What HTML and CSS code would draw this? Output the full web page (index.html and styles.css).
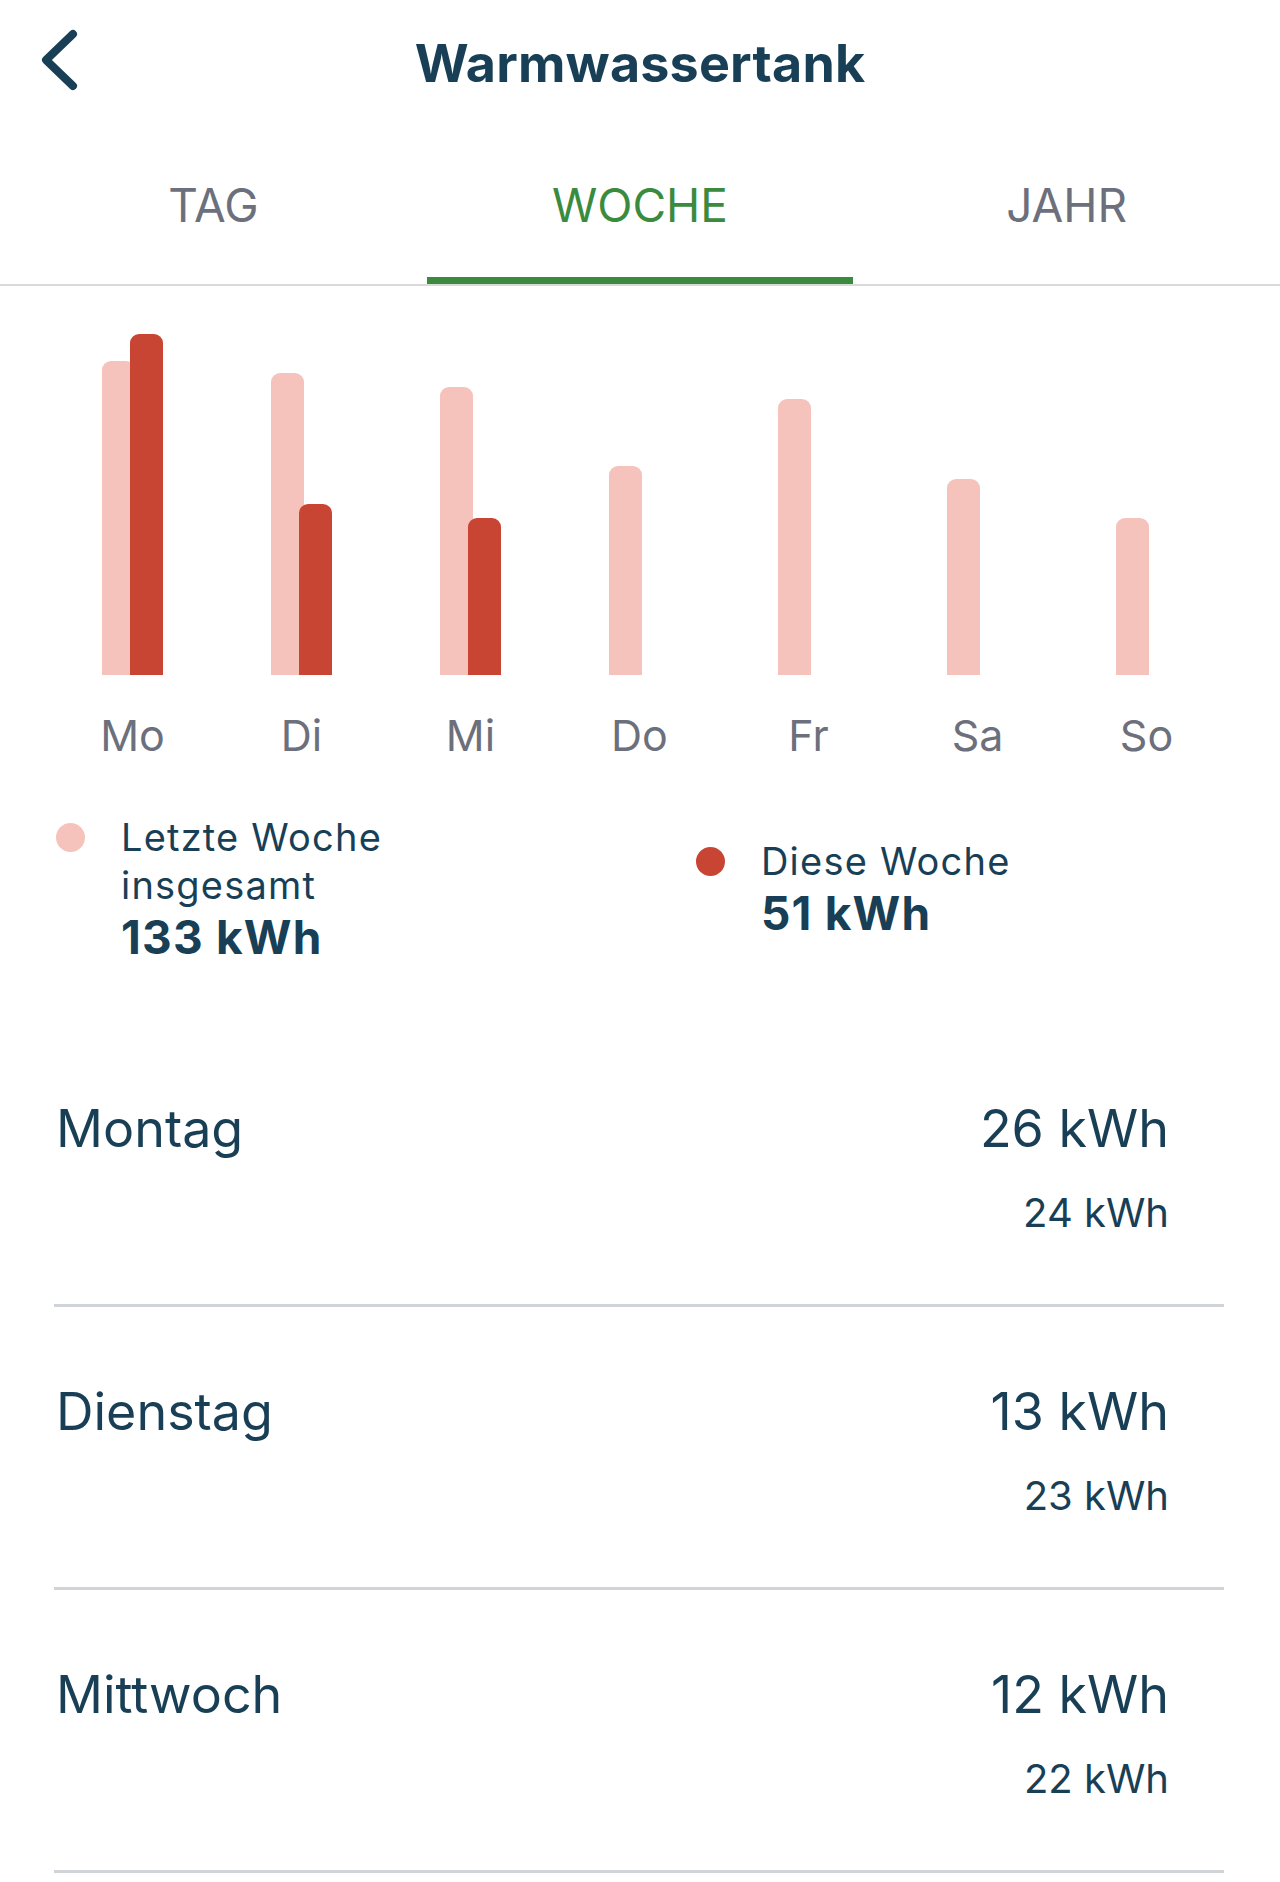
FILE: index.html
```html
<!DOCTYPE html>
<html lang="de">
<head>
    <meta charset="UTF-8">
    <meta name="viewport" content="width=device-width, initial-scale=1.0">
    <title>Warmwassertank</title>
    <link rel="stylesheet" href="styles.css">
</head>
<body>
    <header class="nav">
        <button class="back" aria-label="Zurück">
            <svg width="44" height="64" viewBox="0 0 44 64">
                <path d="M34 6 L7 32 L34 58" fill="none" stroke="#183f56" stroke-width="8" stroke-linecap="round" stroke-linejoin="round"/>
            </svg>
        </button>
        <h1 class="title">Warmwassertank</h1>
        <div></div>
    </header>

    <nav class="tabs">
        <div class="tab">TAG</div>
        <div class="tab active">WOCHE</div>
        <div class="tab">JAHR</div>
    </nav>

    <!-- bar heights: 13.1px per kWh -->
    <section class="chart">
        <div class="day">
            <div class="bars">
                <div class="bar last" style="height: 314px"></div>
                <div class="bar this" style="height: 341px"></div>
            </div>
            <div class="day-label">Mo</div>
        </div>
        <div class="day">
            <div class="bars">
                <div class="bar last" style="height: 302px"></div>
                <div class="bar this" style="height: 171px"></div>
            </div>
            <div class="day-label">Di</div>
        </div>
        <div class="day">
            <div class="bars">
                <div class="bar last" style="height: 288px"></div>
                <div class="bar this" style="height: 157px"></div>
            </div>
            <div class="day-label">Mi</div>
        </div>
        <div class="day">
            <div class="bars">
                <div class="bar last" style="height: 209px"></div>
            </div>
            <div class="day-label">Do</div>
        </div>
        <div class="day">
            <div class="bars">
                <div class="bar last" style="height: 276px"></div>
            </div>
            <div class="day-label">Fr</div>
        </div>
        <div class="day">
            <div class="bars">
                <div class="bar last" style="height: 196px"></div>
            </div>
            <div class="day-label">Sa</div>
        </div>
        <div class="day">
            <div class="bars">
                <div class="bar last" style="height: 157px"></div>
            </div>
            <div class="day-label">So</div>
        </div>
    </section>

    <section class="legend">
        <div class="legend-item">
            <span class="dot last"></span>
            <div class="legend-text">
                <div class="legend-name">Letzte Woche<br>insgesamt</div>
                <div class="legend-value">133 kWh</div>
            </div>
        </div>
        <div class="legend-item">
            <span class="dot this"></span>
            <div class="legend-text">
                <div class="legend-name">Diese Woche</div>
                <div class="legend-value">51 kWh</div>
            </div>
        </div>
    </section>

    <section class="list">
        <div class="row">
            <div class="row-day">Montag</div>
            <div class="row-values">
                <div class="row-now">26 kWh</div>
                <div class="row-before">24 kWh</div>
            </div>
        </div>
        <div class="row">
            <div class="row-day">Dienstag</div>
            <div class="row-values">
                <div class="row-now">13 kWh</div>
                <div class="row-before">23 kWh</div>
            </div>
        </div>
        <div class="row">
            <div class="row-day">Mittwoch</div>
            <div class="row-values">
                <div class="row-now">12 kWh</div>
                <div class="row-before">22 kWh</div>
            </div>
        </div>
    </section>
</body>
</html>
```

FILE: styles.css
```css
body {
    margin: 0;
    background: #fff;
    font-family: Inter, "Noto Sans", sans-serif;
    color: #183f56;
}

/* Top bar */
.nav {
    display: grid;
    grid-template-columns: 160px 1fr 160px;
    align-items: center;
    height: 110px;
    padding-top: 8px;
}

.back {
    border: none;
    background: none;
    padding: 0 0 0 39px;
    margin-top: -6px;
    display: flex;
    cursor: pointer;
}

.title {
    margin: 0;
    text-align: center;
    font-size: 52px;
    font-weight: 700;
    letter-spacing: 0.2px;
}

/* Tabs */
.tabs {
    display: grid;
    grid-template-columns: repeat(3, 1fr);
    border-bottom: 2px solid #dadada;
}

.tab {
    box-sizing: border-box;
    height: 166px;
    padding-top: 14px;
    display: flex;
    align-items: center;
    justify-content: center;
    font-size: 46px;
    color: #6c707c;
    border-bottom: 7px solid transparent;
}

.tab.active {
    color: #3b8b3f;
    border-bottom-color: #3b8b3f;
}

/* Chart */
.chart {
    display: grid;
    grid-template-columns: repeat(7, 1fr);
    padding: 0 49px 0 48px;
}

.day {
    display: flex;
    flex-direction: column;
    align-items: center;
}

.bars {
    width: 61px;
    height: 389px;
    display: flex;
    align-items: flex-end;
}

.bar {
    width: 33px;
    flex: none;
    border-radius: 9px 9px 0 0;
}

.bar.last {
    background: #f5c3bc;
}

.bar.this {
    background: #c84433;
    margin-left: -5px;
}

.day-label {
    margin-top: 34px;
    font-size: 43px;
    line-height: 52px;
    color: #6c707c;
}

/* Legend */
.legend {
    display: grid;
    grid-template-columns: 1fr 1fr;
    align-items: center;
    padding-top: 52px;
}

.legend-item {
    display: flex;
    align-items: flex-start;
    padding-left: 56px;
}

.dot {
    width: 29px;
    height: 29px;
    border-radius: 50%;
    margin-top: 10px;
    margin-right: 36px;
    flex: none;
}

.dot.last {
    background: #f5c3bc;
}

.dot.this {
    background: #c84433;
}

.legend-name {
    font-size: 38px;
    line-height: 48px;
    letter-spacing: 1.2px;
}

.legend-value {
    font-size: 46px;
    line-height: 56px;
    font-weight: 700;
    letter-spacing: 1.2px;
}

/* Day rows */
.list {
    padding: 0 56px 0 54px;
    margin-top: 59px;
}

.row {
    display: flex;
    justify-content: space-between;
    align-items: flex-start;
    height: 280px;
    padding-right: 55px;
    border-bottom: 3px solid #d0d4d8;
}

.row-day {
    font-size: 52px;
    line-height: 66px;
    margin-top: 72px;
    padding-left: 2px;
}

.row-values {
    text-align: right;
    margin-top: 72px;
}

.row-now {
    font-size: 52px;
    line-height: 66px;
}

.row-before {
    font-size: 40px;
    line-height: 50px;
    margin-top: 26px;
}
```
